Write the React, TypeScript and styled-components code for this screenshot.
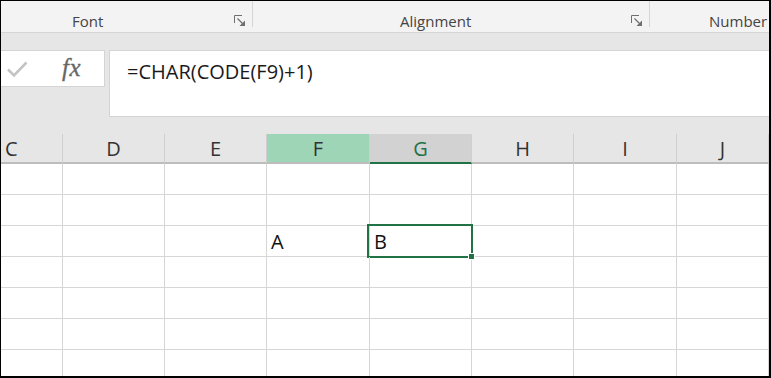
import React from "react";
import styled, { createGlobalStyle } from "styled-components";

const GlobalStyle = createGlobalStyle`
  html, body {
    margin: 0;
    padding: 0;
    background: #ffffff;
    overflow: hidden;
  }
  * {
    box-sizing: border-box;
  }
`;

const COLS = "62px 102px 102px 103px 102px 102px 103px 1fr";
const GREEN = "#217346";

const Frame = styled.div`
  width: 771px;
  height: 378px;
  border-style: solid;
  border-color: #000;
  border-width: 1px 2px 2px 1px;
  display: flex;
  flex-direction: column;
  overflow: hidden;
  font-family: "Open Sans", "Liberation Sans", sans-serif;
  background: #fff;
`;

const Ribbon = styled.div`
  height: 32px;
  flex-shrink: 0;
  display: flex;
  background: #f3f3f3;
  border-bottom: 1px solid #d5d5d5;
`;

const Group = styled.div<{ $width?: number; $pad: number }>`
  display: flex;
  align-items: center;
  height: 100%;
  padding-top: 8px;
  padding-left: ${(p) => p.$pad}px;
  padding-right: 6px;
  width: ${(p) => (p.$width ? `${p.$width}px` : "auto")};
  flex: ${(p) => (p.$width ? "none" : "1")};
`;

const GroupLabel = styled.span`
  font-size: 15px;
  color: #444;
  white-space: nowrap;
`;

const Launcher = styled.svg`
  width: 12px;
  height: 12px;
  margin-left: auto;
  color: #6f6f6f;
`;

const Separator = styled.div`
  width: 1px;
  height: 26px;
  background: #d6d6d6;
  flex-shrink: 0;
`;

const FormulaArea = styled.div`
  height: 101px;
  flex-shrink: 0;
  background: #e6e6e6;
  display: flex;
  align-items: flex-start;
  padding-top: 17px;
  gap: 4px;
`;

const NameBox = styled.div`
  width: 104px;
  height: 37px;
  background: #fff;
  border: 1px solid #d4d4d4;
  border-left: none;
  display: flex;
  align-items: center;
  padding-left: 5px;
`;

const CheckIcon = styled.svg`
  width: 22px;
  height: 18px;
  color: #c4c4c4;
`;

const Fx = styled.span`
  font-family: "Liberation Serif", "DejaVu Serif", serif;
  font-style: italic;
  font-size: 25px;
  color: #666;
  margin-left: 34px;
  letter-spacing: 0.5px;
  line-height: 1;
  margin-top: -3px;
  -webkit-text-stroke: 0.3px #666;
`;

const FormulaBox = styled.div`
  flex: 1;
  height: 67px;
  background: #fff;
  border: 1px solid #d4d4d4;
  border-right: none;
  padding: 7px 0 0 17px;
  font-size: 20px;
  color: #1a1a1a;
  line-height: 28px;
`;

const Sheet = styled.div`
  flex: 1;
  display: flex;
  flex-direction: column;
  background: #fff;
`;

const HeaderRow = styled.div`
  display: grid;
  grid-template-columns: ${COLS};
  height: 30px;
  flex-shrink: 0;
  background: #e6e6e6;
`;

const HeaderCell = styled.div<{ $state?: "col" | "sel"; $partial?: boolean }>`
  display: flex;
  align-items: center;
  justify-content: ${(p) => (p.$partial ? "flex-start" : "center")};
  padding-left: ${(p) => (p.$partial ? "4px" : "0")};
  font-size: 20px;
  color: ${(p) => (p.$state === "sel" ? GREEN : "#333")};
  background: ${(p) =>
    p.$state === "col" ? "#9fd5b7" : p.$state === "sel" ? "#d2d2d2" : "transparent"};
  border-right: 1px solid #cfcfcf;
  border-bottom: 2px solid ${(p) => (p.$state === "sel" ? GREEN : "#bdbdbd")};
`;

const Row = styled.div`
  display: grid;
  grid-template-columns: ${COLS};
  height: 31px;
  flex-shrink: 0;
`;

const Cell = styled.div<{ $selected?: boolean }>`
  position: relative;
  display: flex;
  align-items: center;
  padding-left: 4px;
  font-size: 20px;
  color: #111;
  border-right: 1px solid #d6d6d6;
  border-bottom: 1px solid #d6d6d6;

  ${(p) =>
    p.$selected &&
    `
    &::after {
      content: "";
      position: absolute;
      left: -3px;
      top: -2px;
      right: -2px;
      bottom: -2px;
      border: 2px solid ${GREEN};
      pointer-events: none;
    }
  `}
`;

const FillHandle = styled.span`
  position: absolute;
  right: -4px;
  bottom: -4px;
  width: 7px;
  height: 7px;
  background: ${GREEN};
  border: 1px solid #fff;
  z-index: 2;
`;

const columns = ["C", "D", "E", "F", "G", "H", "I", "J"];

const data: Record<string, string> = {
  "2-F": "A",
  "2-G": "B",
};

const LauncherIcon = () => (
  <Launcher viewBox="0 0 12 12">
    <path d="M0.5 8V0.5H8" stroke="currentColor" fill="none" />
    <path d="M3.5 3.5L8.5 8.5" stroke="currentColor" strokeWidth="1.3" />
    <path d="M11 5.5V11H5.5Z" fill="currentColor" />
  </Launcher>
);

const App = () => {
  return (
    <>
      <GlobalStyle />
      <Frame>
        <Ribbon>
          <Group $width={251} $pad={71}>
            <GroupLabel>Font</GroupLabel>
            <LauncherIcon />
          </Group>
          <Separator />
          <Group $width={396} $pad={147}>
            <GroupLabel>Alignment</GroupLabel>
            <LauncherIcon />
          </Group>
          <Separator />
          <Group $pad={59}>
            <GroupLabel>Number</GroupLabel>
          </Group>
        </Ribbon>

        <FormulaArea>
          <NameBox>
            <CheckIcon viewBox="0 0 22 18">
              <path
                d="M2 9.5L8 15.5L20.5 2.5"
                stroke="currentColor"
                strokeWidth="2.6"
                fill="none"
              />
            </CheckIcon>
            <Fx>fx</Fx>
          </NameBox>
          <FormulaBox>=CHAR(CODE(F9)+1)</FormulaBox>
        </FormulaArea>

        <Sheet>
          <HeaderRow>
            {columns.map((c) => (
              <HeaderCell
                key={c}
                $partial={c === "C"}
                $state={c === "F" ? "col" : c === "G" ? "sel" : undefined}
              >
                {c}
              </HeaderCell>
            ))}
          </HeaderRow>
          {Array.from({ length: 7 }).map((_, r) => (
            <Row key={r}>
              {columns.map((c) => {
                const selected = r === 2 && c === "G";
                return (
                  <Cell key={c} $selected={selected}>
                    {data[`${r}-${c}`]}
                    {selected && <FillHandle />}
                  </Cell>
                );
              })}
            </Row>
          ))}
        </Sheet>
      </Frame>
    </>
  );
};

export default App;
